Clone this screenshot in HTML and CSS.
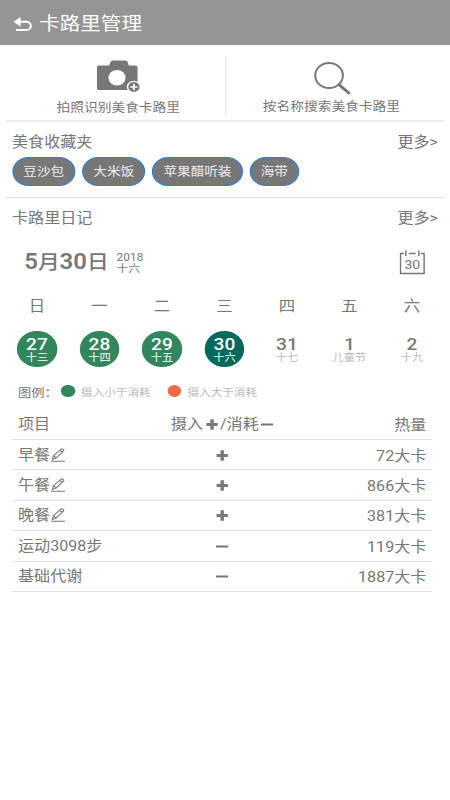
FILE: index.html
```html
<!DOCTYPE html>
<html lang="zh-CN">
<head>
<meta charset="utf-8">
<title>卡路里管理</title>
<link rel="stylesheet" href="styles.css">
</head>
<body>
<svg class="defs" aria-hidden="true">
  <symbol id="pencil" viewBox="0 0 13 14">
    <path d="M.3 13.3H12.7M1.600 11.400l.9-3.700L9.400 1.200q.8-.7 1.600.1l.3.3q.8.8 0 1.600L4.900 10.100zM8.300 2.400l2 2M2.500 7.700l2.400 2.400" fill="none" stroke="currentColor" stroke-width="1"/>
  </symbol>
  <symbol id="plus" viewBox="0 0 11 11">
    <path d="M.5 5.500H10.500M5.500.3V10.700" fill="none" stroke="currentColor" stroke-width="3"/>
  </symbol>
  <symbol id="minus" viewBox="0 0 11 11">
    <path d="M0 5.500H11" fill="none" stroke="currentColor" stroke-width="2"/>
  </symbol>
</svg>
<div class="screen">
  <header class="topbar">
    <svg class="back" viewBox="0 0 17 15"><path d="M0 4.800L6.300 0V9.600z" fill="#fff"/><path d="M4 4.800H11.300a4.100 4.100 0 0 1 0 8.200H2.200" fill="none" stroke="#fff" stroke-width="1.900"/></svg>
    <h1>卡路里管理</h1>
  </header>

  <section class="actions">
    <div class="action photo">
      <svg class="camera" viewBox="0 0 39 33"><path d="M2 5.500h9l1.200-3.400Q12.800.5 14.500.5H25.200Q27 .5 27.500 2.100L28.500 5.500H34.500Q36.300 5.500 36.300 7.500V28Q36.300 30 34.500 30H2Q0 30 0 28V7.500Q0 5.500 2 5.500z" fill="#777"/><ellipse cx="18" cy="17.800" rx="7.600" ry="7.800" fill="#fff"/><circle cx="33" cy="27" r="6.300" fill="#fff"/><circle cx="33" cy="27" r="5" fill="#777"/><path d="M29.800 27h6.400M33 23.800v6.400" stroke="#fff" stroke-width="1.500"/></svg>
      <span>拍照识别美食卡路里</span>
    </div>
    <div class="action search">
      <svg class="lens" viewBox="0 0 33 33"><ellipse cx="13.500" cy="13.500" rx="12.300" ry="12.500" fill="none" stroke="#777" stroke-width="1.800"/><path d="M22.200 22.500L31 31" stroke="#777" stroke-width="2.800" stroke-linecap="round"/></svg>
      <span>按名称搜索美食卡路里</span>
    </div>
  </section>

  <section class="favorites">
    <div class="heading"><h2>美食收藏夹</h2><a>更多&gt;</a></div>
    <div class="chips"><span>豆沙包</span><span>大米饭</span><span>苹果醋听装</span><span>海带</span></div>
  </section>

  <section class="diary">
    <div class="heading"><h2>卡路里日记</h2><a>更多&gt;</a></div>
    <div class="date">
      <strong>5<em>月</em>30<em>日</em></strong>
      <div class="year"><span>2018</span><span>十六</span></div>
      <svg class="calendar" viewBox="0 0 23 25"><path d="M4 3.500H1V23.500H22V3.500H19M8.500 3.500H14.500M5.700 .5V6M17.300 .5V6" fill="none" stroke="#777" stroke-width="1.300"/><text x="11.500" y="18.800" text-anchor="middle">30</text></svg>
    </div>
    <div class="week names"><span>日</span><span>一</span><span>二</span><span>三</span><span>四</span><span>五</span><span>六</span></div>
    <div class="week days">
      <div class="day less"><b>27</b><small>十三</small></div>
      <div class="day less"><b>28</b><small>十四</small></div>
      <div class="day less"><b>29</b><small>十五</small></div>
      <div class="day current"><b>30</b><small>十六</small></div>
      <div class="day"><b>31</b><small>十七</small></div>
      <div class="day"><b>1</b><small>儿童节</small></div>
      <div class="day"><b>2</b><small>十九</small></div>
    </div>
    <div class="legend"><span class="label">图例：</span><i class="dot green"></i><span>摄入小于消耗</span><i class="dot orange"></i><span>摄入大于消耗</span></div>
    <div class="table">
      <div class="row head"><span>项目</span><span class="mid">摄入<svg><use href="#plus"/></svg>/消耗<svg><use href="#minus"/></svg></span><span class="kcal">热量</span></div>
      <div class="row"><span>早餐<svg class="edit"><use href="#pencil"/></svg></span><span class="mid"><svg><use href="#plus"/></svg></span><span class="kcal">72大卡</span></div>
      <div class="row"><span>午餐<svg class="edit"><use href="#pencil"/></svg></span><span class="mid"><svg><use href="#plus"/></svg></span><span class="kcal">866大卡</span></div>
      <div class="row"><span>晚餐<svg class="edit"><use href="#pencil"/></svg></span><span class="mid"><svg><use href="#plus"/></svg></span><span class="kcal">381大卡</span></div>
      <div class="row"><span>运动3098步</span><span class="mid"><svg><use href="#minus"/></svg></span><span class="kcal">119大卡</span></div>
      <div class="row"><span>基础代谢</span><span class="mid"><svg><use href="#minus"/></svg></span><span class="kcal">1887大卡</span></div>
    </div>
  </section>
</div>
</body>
</html>
```
FILE: styles.css
```css
* { box-sizing: border-box; }
html, body { margin: 0; background: #fff; overflow: hidden; }
.defs { display: none; }
/* 400px design stretched to the 450px viewport */
.screen {
  width: 400px;
  height: 800px;
  transform: scaleX(1.125);
  transform-origin: 0 0;
  font-family: Roboto, "Noto Sans CJK SC", sans-serif;
  font-size: 14.3px;
  font-weight: 400;
  color: #777;
  white-space: nowrap;
}
h1, h2 { margin: 0; font-weight: 400; }
svg { display: block; flex: none; }

.topbar {
  height: 45px;
  background: #959595;
  display: flex;
  align-items: center;
  padding: 2px 0 0 11.5px;
  color: #fff;
}
.back { width: 17px; height: 15px; margin: 2px 6.3px 0 0; }
.topbar h1 { font-size: 18.3px; line-height: 26px; }

.actions {
  height: 77px;
  margin: 0 5.3px;
  border-bottom: 2px solid #eee;
  display: grid;
  grid-template-columns: 1fr 1fr;
  position: relative;
}
.actions::after {
  content: "";
  position: absolute;
  left: 194.3px;
  top: 11px;
  width: 1px;
  height: 60px;
  background: #e6e6e6;
}
.action { display: flex; flex-direction: column; align-items: center; font-size: 12.2px; line-height: 16px; }
.photo { padding: 15px 0 0 5px; }
.search { padding: 17px 5.5px 0 0; }
.camera { width: 39px; height: 33px; margin-bottom: 7px; }
.lens { width: 33px; height: 33px; margin: 0 0 4px 2px; }

.favorites { height: 76px; margin: 0 5.3px; padding: 10px 5.4px 0; border-bottom: 1px solid #e2e2e2; }
.heading { display: flex; justify-content: space-between; line-height: 20px; }
.heading h2 { font-size: 14.3px; }
.heading a { font-size: 14.3px; }
.chips { display: flex; gap: 6px; margin-top: 5px; }
.chips span {
  height: 29px;
  line-height: 28px;
  padding: 0 9px;
  border: 1.2px solid #2a7ce0;
  border-radius: 14.5px;
  background: #777;
  color: #eee;
  font-size: 12.1px;
}

.diary .heading { padding: 10px 10.7px 0; }
.date { display: flex; align-items: center; height: 44px; margin: 12px 22px 0 21.5px; }
.date strong { font-size: 21.3px; font-weight: 600; line-height: 26px; }
.date em { font-style: normal; font-weight: 500; font-size: 19.3px; }
.year { margin: 2px 0 0 7px; display: flex; flex-direction: column; font-size: 10.5px; line-height: 11px; }
.year span:first-child { letter-spacing: .1px; }
.calendar { width: 23px; height: 25px; margin-left: auto; }
.calendar text { font: 12.5px Roboto, sans-serif; fill: #777; }

.week { display: grid; grid-template-columns: repeat(7, 55.55px); margin-left: 5.1px; justify-items: center; }
.names { margin-top: 10px; line-height: 24px; font-size: 14.6px; }
.days { margin-top: 13px; }
.day {
  width: 35.6px;
  height: 36px;
  border-radius: 50%;
  display: flex;
  flex-direction: column;
  align-items: center;
  padding-top: 7px;
}
.day b { font-size: 17px; line-height: 13px; font-weight: 500; }
.day small { font-size: 10px; line-height: 11px; color: #bbb; margin-top: 1px; }
.less { background: #32865b; color: #fff; }
.current { background: #00695c; color: #fff; }
.less small, .current small { color: #fff; }

.legend { display: flex; align-items: center; height: 20px; margin: 14px 0 0 16px; font-size: 10.3px; color: #bbb; }
.label { font-size: 11.8px; color: #777; width: 38.3px; }
.dot { width: 12.4px; height: 12.5px; border-radius: 50%; margin-right: 5.4px; }
.green { background: #32865b; }
.orange { background: #f26a44; margin-left: 15px; }

.table { margin: 8px 16px 0 10.7px; }
.row {
  display: grid;
  grid-template-columns: 110px 1fr 110px;
  align-items: center;
  height: 30.4px;
  padding: 0 5px 0 5.3px;
  border-bottom: 1px solid #e2e2e2;
}
.row > span { display: flex; align-items: center; line-height: 20px; }
.head { height: 31px; }
.row > .mid { justify-content: center; gap: 2px; }
.row > .kcal { justify-content: flex-end; padding-top: 2px; }
.mid svg { width: 11px; height: 11px; margin-top: 1px; }
.edit { width: 13px; height: 14px; margin-left: .7px; }
```
